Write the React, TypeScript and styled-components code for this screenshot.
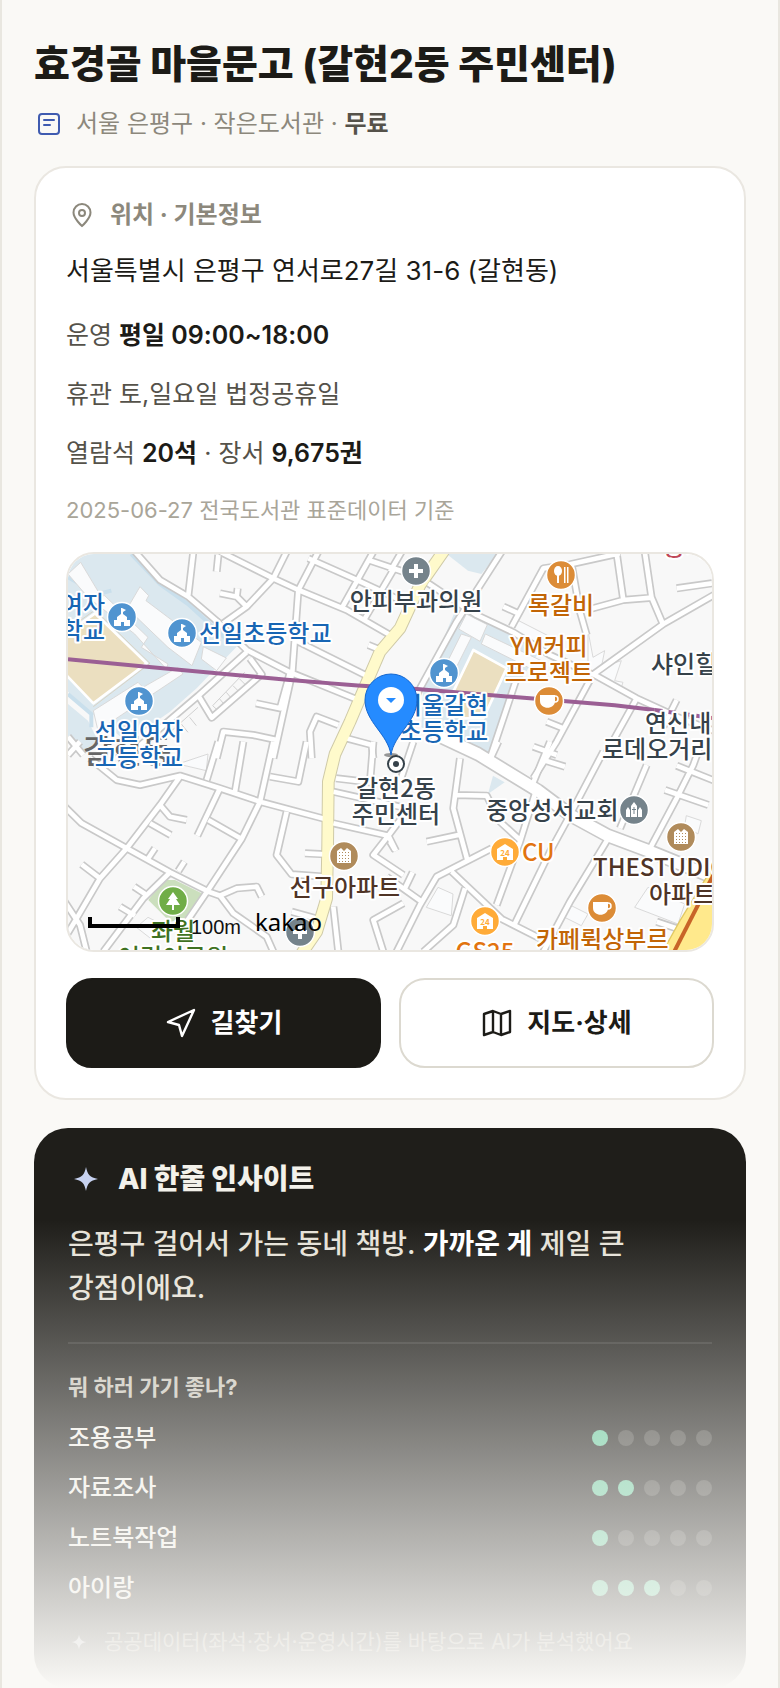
import React from 'react';
import styled, { createGlobalStyle, css } from 'styled-components';

const GlobalStyle = createGlobalStyle`
  *, *::before, *::after { box-sizing: border-box; }
  body {
    margin: 0;
    background: #faf9f6;
    color: #1c1b17;
    font-family: Inter, "Noto Sans CJK KR", sans-serif;
    word-break: keep-all;
  }
  h1, h2, h3, p, ul { margin: 0; padding: 0; }
`;

const Page = styled.main`
  position: relative;
  min-height: 100vh;
  padding: 39px 32px 0;
  border: solid #e9e7e0;
  border-width: 0 2px;
`;

const Title = styled.h1`
  font-size: 39px;
  line-height: 50px;
  font-weight: 800;
`;

const Meta = styled.p`
  display: flex;
  align-items: center;
  gap: 14px;
  margin-top: 17px;
  padding-left: 2px;
  font-size: 24px;
  line-height: 36px;
  color: #8c887c;
  strong { font-weight: 600; color: #55524a; }
`;

const Card = styled.section`
  margin-top: 24px;
  padding: 31px 30px 30px;
  background: #fff;
  border: 2px solid #eae7e1;
  border-radius: 32px;
`;

const CardHeading = styled.h2`
  display: flex;
  align-items: center;
  gap: 14px;
  padding-left: 2px;
  font-size: 24px;
  line-height: 32px;
  font-weight: 700;
  color: #8c887c;
`;

const Address = styled.p`
  margin-top: 20px;
  font-size: 26px;
  line-height: 40px;
`;

const Facts = styled.div`
  display: flex;
  flex-direction: column;
  gap: 23px;
  margin-top: 26px;
`;

const Fact = styled.p`
  font-size: 25px;
  line-height: 36px;
  color: #55524a;
  strong { font-weight: 600; color: #1c1b17; }
`;

const Source = styled.p`
  font-size: 22px;
  line-height: 32px;
  color: #a9a599;
`;

const MapBox = styled.div`
  height: 400px;
  margin-top: 26px;
  overflow: hidden;
  border: 2px solid #eae7e1;
  border-radius: 28px;
  svg { display: block; width: 100%; height: 100%; }
`;

const Actions = styled.div`
  display: grid;
  grid-template-columns: 1fr 1fr;
  gap: 18px;
  margin-top: 26px;
`;

const ActionButton = styled.button<{ $primary?: boolean }>`
  display: flex;
  align-items: center;
  justify-content: center;
  gap: 14px;
  height: 90px;
  padding: 0;
  border: 2px solid #dcd9d0;
  border-radius: 26px;
  background: #fff;
  color: #1c1b17;
  font: inherit;
  font-size: 26px;
  line-height: 36px;
  font-weight: 700;
  ${(p) => p.$primary && css`
    background: #1c1b17;
    border-color: #1c1b17;
    color: #fff;
  `}
`;

const Insight = styled.section`
  margin-top: 28px;
  padding: 31px 34px;
  border-radius: 34px;
  background: #1f1e1a;
  color: #f3f1ea;
`;

const InsightHeading = styled.h2`
  display: flex;
  align-items: center;
  gap: 14px;
  font-size: 28px;
  line-height: 40px;
  font-weight: 800;
`;

const InsightText = styled.p`
  margin-top: 23px;
  padding-bottom: 32px;
  border-bottom: 2px solid #34332f;
  font-size: 28px;
  line-height: 44px;
  font-weight: 500;
  color: #e6e2d8;
  strong { font-weight: 700; color: #fff; }
`;

const ScoreTitle = styled.h3`
  margin-top: 27px;
  font-size: 22px;
  line-height: 32px;
  font-weight: 700;
  color: #c9c5ba;
`;

const Scores = styled.ul`
  margin-top: 10px;
  list-style: none;
`;

const ScoreRow = styled.li`
  display: flex;
  align-items: center;
  justify-content: space-between;
  height: 50px;
  font-size: 24px;
  line-height: 36px;
  font-weight: 500;
  color: #f3f1ea;
`;

const Dots = styled.span`
  display: flex;
  gap: 10px;
`;

const Dot = styled.span<{ $on: boolean }>`
  width: 16px;
  height: 16px;
  border-radius: 50%;
  background: ${(p) => (p.$on ? '#68c89c' : '#45443f')};
`;

const Note = styled.p`
  display: flex;
  align-items: center;
  gap: 14px;
  margin-top: 14px;
  font-size: 21px;
  line-height: 30px;
  color: #8c887c;
`;

const Fade = styled.div`
  position: absolute;
  inset: auto 0 0;
  height: 468px;
  background: linear-gradient(rgba(250, 249, 246, 0), #faf9f6);
  pointer-events: none;
`;

const MapSvg = styled.svg`
  font-family: "Noto Sans CJK KR", sans-serif;
`;

const Label = styled.text`
  font-size: 24px;
  font-weight: 500;
  paint-order: stroke;
  stroke: #fff;
  stroke-width: 4px;
  stroke-linejoin: round;
`;

const District = styled.text`
  font-size: 32px;
  font-weight: 500;
  fill: #666;
`;

const Brand = styled.text`
  font-family: "Noto Sans", sans-serif;
  font-size: 24px;
  fill: #000;
`;

const ScaleText = styled.text`
  font-family: "Liberation Sans", sans-serif;
  font-size: 20px;
  fill: #111;
`;

const BookIcon = () => (
  <svg width="26" height="26" viewBox="0 0 26 26" fill="none" stroke="#3f5bb0" strokeWidth="2" strokeLinecap="round" aria-hidden="true">
    <rect x="3" y="3" width="20" height="20" rx="3" />
    <path d="M8 9h10M8 14h6" />
  </svg>
);

const PinIcon = () => (
  <svg width="28" height="28" viewBox="0 0 28 28" fill="none" stroke="#8c887c" strokeWidth="2" aria-hidden="true">
    <path d="M14 25s-8.500-7.500-8.500-13.500a8.500 8.500 0 0 1 17 0C22.500 17.500 14 25 14 25z" />
    <circle cx="14" cy="12" r="3" />
  </svg>
);

const SendIcon = () => (
  <svg width="32" height="32" viewBox="0 0 32 32" fill="none" stroke="currentColor" strokeWidth="2.4" strokeLinejoin="round" aria-hidden="true">
    <path d="M3 15 29 3 17 29 14 18z" />
  </svg>
);

const MapIcon = () => (
  <svg width="32" height="32" viewBox="0 0 32 32" fill="none" stroke="currentColor" strokeWidth="2.4" strokeLinejoin="round" aria-hidden="true">
    <path d="M3 7 12 4l8 3 9-3v21l-9 3-8-3-9 3zM12 4v21M20 7v21" />
  </svg>
);

const Sparkle = ({ size, color }: { size: number; color: string }) => (
  <svg width={size} height={size} viewBox="0 0 24 24" fill={color} aria-hidden="true">
    <path d="M12 4c1 5 2.500 7 8 8-5.500 1-7 3-8 8-1-5-2.500-7-8-8 5.500-1 7-3 8-8z" />
  </svg>
);

/* Road centre lines by map tile; each tile has its own origin. */
const TILES: Record<string, { at: [number, number]; roads: string }> = {
  nw: {
    at: [-24, -27],
    roads: `M225 20 300 105 385 155 470 228 560 315 690 382 895 465 M400 20 385 150 M475 30 470 80
      M480 20 640 100 715 135 860 195 990 270 M680 20 640 100 560 185 490 235 M560 185 530 155 480 145 M530 155 533 130
      M775 20 715 135 697 382 640 640 M745 40 880 100 1030 170 M940 20 845 190 M925 45 1030 80 M1000 75 915 220
      M690 382 660 490 588 475 M705 285 925 395 M925 300 962 315 M560 322 415 452 455 518 605 388 570 340
      M415 452 230 610 170 640 M470 640 490 560 580 570 650 585 M755 640 750 560 770 515 835 540 M860 580 935 600 940 640 M24 575 70 630 M24 630 60 590`,
  },
  ne: {
    at: [966, -27],
    roads: `M335 20 200 230 90 430 30 560 M35 20 0 80 M115 115 190 165 260 210 370 262 480 330 610 390
      M365 245 460 70 540 58 690 25 M340 185 385 205 M545 60 570 200 590 270 M680 25 700 165 590 195 M700 165 785 158 820 240
      M765 25 785 160 M980 145 820 237 610 388 M860 130 966 115 M610 388 740 460 860 515 980 560 M600 405 500 590 430 700
      M740 460 640 640 M430 605 500 630 M470 530 520 550 M820 545 860 465 M380 400 300 640`,
  },
  sw: {
    at: [-24, 573],
    roads: `M14 185 65 235 200 310 330 382 450 442 480 452 M90 40 170 105 240 120 360 92 480 130 600 170 795 222
      M360 95 300 180 200 310 120 400 50 520 14 580 M14 470 60 540 80 620 M300 180 330 215 380 225 M270 235 332 270
      M480 130 412 272 M445 225 545 282 M640 -10 600 170 545 282 440 442 380 530 M550 -10 525 140 M475 -10 440 105
      M740 -10 715 110 630 95 M680 200 650 330 695 388 795 395 M735 325 795 328 M695 500 775 522 M480 452 520 505 620 575 640 620
      M480 452 530 430 590 425 605 455 M330 382 250 460 130 620 M222 425 255 447 M180 485 225 512 M120 400 65 358
      M265 340 285 310 M355 378 373 350 M820 140 1020 185 M820 235 985 272 1020 225 M985 272 940 330 1030 390
      M820 485 835 620 M1030 475 940 525 970 620 M940 -10 930 112 828 100 M985 272 1008 318`,
  },
  se: {
    at: [966, 573],
    roads: `M70 -10 30 110 M210 40 190 190 232 345 M195 150 290 152 330 230 390 285 M480 -10 425 125 M460 45 525 65
      M640 20 540 210 480 320 370 545 M440 130 390 290 320 480 M655 280 540 470 460 620 M110 290 205 270
      M305 310 140 395 90 480 20 620 M185 380 335 522 450 580 M225 430 190 540 100 620 M-10 395 95 470 M45 430 68 382
      M0 290 15 315 M935 -10 910 60 860 160 780 310 M860 62 980 110 M825 135 955 180 M800 530 890 560 M770 60 690 250 M325 -10 295 55`,
  },
};

const MAIN_ROAD = 'M1080 530 1230 600 1410 710 1510 785 1620 845 1740 890 1950 975';
const YELLOW_ROAD = 'M1135 -20 1056 93 996 223 936 293 890 400 846 503 801 600 781 683 779 873 776 1033 746 1133 700 1200';
const BUILDINGS =
  'M0 60 38 25 92 115 60 130zM216 98 242 125 234 140 400 265 372 335 300 280 178 163zM406 278 475 312 446 350 400 315z' +
  'M76 470 210 385 225 400 330 340 345 360 90 530zM60 130 110 125 240 250 220 280 300 330 295 345 200 240z' +
  'M1195 180 1258 212 1236 262 1172 225zM1252 240 1420 320 1400 350 1240 270zM1180 240 1210 250 1160 350 1130 340z' +
  'M1348 198 1440 245 1430 280 1330 230zM1560 230 1575 310 1610 290 1600 340 1660 320 1640 380 1665 385 1655 415 1560 360z' +
  'M1110 1000 1155 1020 1150 1085 1075 1060zM1740 1000 1850 1050 1830 1110 1700 1060zM1500 1050 1560 1080 1540 1115 1490 1090z' +
  'M1855 785 1900 800 1890 840 1850 815zM240 1090 280 1110 250 1155 205 1120zM330 630 420 600 415 650z';

const Ground = () => (
  <g transform="scale(0.33333)" fill="none" strokeLinejoin="round">
    <path fill="#f8f8f8" d="M0 0h1932v1188H0z" />
    <g fill="#dbe8ef">
      <path d="M0 0H200L276 78 361 128 516 268 386 403 306 473 176 563 66 473 0 413z" />
      <path d="M0 450 60 500 90 560 40 600 0 560z" />
      <path d="M1136 0H1290L1240 60 1200 50z" />
      <path d="M1166 160 1200 178 1416 290 1346 395 1276 610 1190 590 1060 520 1066 400z" />
      <path d="M1180 573H1290L1255 622 1200 600zM1275 665 1310 685 1260 720z" />
    </g>
    <path stroke="#c9dfec" strokeWidth="12" d="M190 0 276 90 360 150 480 260M0 70 90 120 130 110M0 420 70 480 70 520" />
    <path fill="#fafbfc" stroke="#d9d9d9" strokeWidth="3" d={BUILDINGS} />
    <path stroke="#d0d0d0" strokeWidth="3" d="M434 455 530 355M434 455 450 470M455 435 472 455M475 415 492 435M495 395 512 412M515 375 532 392M300 540 390 460M340 510 360 535M365 490 385 515" />
    <path fill="#ebdfc0" stroke="#fff" strokeWidth="8" d="M-10 243 81 178 236 328 76 448-10 358z" />
    <path stroke="#d9c9ae" strokeWidth="2" d="M-10 233 81 168 246 328 76 458" />
    <path fill="#ebdfc0" stroke="#fff" strokeWidth="8" d="M1216 288 1316 343 1246 493 1186 493 1156 413z" />
    <path fill="#cbdfbd" d="M241 1038 286 978H321L401 1018 361 1093 306 1103z" />
    <g stroke="#c9c9c9" strokeWidth="24">
      {Object.entries(TILES).map(([k, t]) => (
        <path key={k} transform={`translate(${t.at.join(' ')})`} d={t.roads} />
      ))}
      <path strokeWidth="44" d={MAIN_ROAD} />
    </g>
    <path stroke="#cfcaa8" strokeWidth="38" d={YELLOW_ROAD} />
    <g stroke="#fff" strokeWidth="14">
      {Object.entries(TILES).map(([k, t]) => (
        <path key={k} transform={`translate(${t.at.join(' ')})`} d={t.roads} />
      ))}
      <path strokeWidth="34" d={MAIN_ROAD} />
    </g>
    <path stroke="#fffacb" strokeWidth="32" d={YELLOW_ROAD} />
    <path stroke="#e2c964" strokeWidth="4" fill="#ffe98c" d="M1940 930 1836 1100 1780 1200h160z" />
    <path stroke="#c86428" strokeWidth="12" d="M1940 955 1815 1200" />
    <path stroke="#9b5f94" strokeWidth="12" d="M0 316C300 345 600 374 906 397L1046 405 1386 433 1640 454 1760 468" />
    <path stroke="#9b5f94" strokeWidth="12" strokeDasharray="24 18" d="M1760 468 1940 493" />
  </g>
);

type Kind = 'school' | 'hospital' | 'food' | 'cafe' | 'apt' | 'store' | 'church' | 'park';

const COLORS: Record<Kind, string> = {
  school: '#5094d0',
  hospital: '#75838b',
  food: '#dc8c37',
  cafe: '#dc8c37',
  apt: '#b08b5b',
  store: '#ffab38',
  church: '#75838b',
  park: '#70ad47',
};

const APT_WINDOWS = [-4, -1, 2, 5].flatMap((y) => [-5, -2, 1, 4].map((x) => `M${x} ${y}h1v1h-1z`)).join('');

const Glyph = ({ kind }: { kind: Kind }) => {
  const color = COLORS[kind];
  switch (kind) {
    case 'school':
      return <path fill="#fff" d="M0-9 4-7 1-5v2l4 3v3h3v6H2V5h-3v4h-7V3h3V0l4-3v-6z" />;
    case 'hospital':
      return <path fill="#fff" d="M-2-7h4v5h5v4H2v5h-4V2h-5v-4h5z" />;
    case 'food':
      return (
        <g fill="#fff">
          <ellipse cx="-3" cy="-4" rx="4" ry="5" />
          <path d="M-4 0h2v8h-2zM3-8h1.500V8H3zM6-8h1.500V8H6z" />
        </g>
      );
    case 'cafe':
      return (
        <g>
          <path fill="#fff" d="M-9-6H6V0C6 9-9 9-9 0z" />
          <circle cx="6" cy="-2" r="3" fill="none" stroke="#fff" strokeWidth="1.500" />
        </g>
      );
    case 'apt':
      return (
        <g>
          <path fill="#fff" d="M-7 7v-12l4-3 3 3 3-3 4 3V7z" />
          <path fill={color} d={APT_WINDOWS} />
        </g>
      );
    case 'store':
      return (
        <g>
          <path fill="#fff" d="M-8 8v-11l8-5 8 5V8H2V5h-4v3z" />
          <text y="4" textAnchor="middle" fontSize="8" fontWeight="700" fill={color}>24</text>
        </g>
      );
    case 'church':
      return (
        <g>
          <path fill="#fff" d="M-3 7v-11l3-4 3 4V7zM-8 7V0l2-3 2 3v7zM4 7V0l2-3 2 3v7z" />
          <path fill={color} d="M-.500-3h1v2h1.500v1H.500v4h-1V0H-2v-1h1.500z" />
        </g>
      );
    case 'park':
      return <path fill="#fff" d="M0-9l5 7H3l4 6H1v5h-2V4h-6l4-6h-2z" />;
  }
};

const POIS: [Kind, number, number][] = [
  ['school', 54, 63], ['school', 114, 79], ['school', 71, 147], ['school', 376, 119],
  ['hospital', 348, 17], ['hospital', 232, 378], ['food', 493, 21], ['cafe', 481, 147],
  ['cafe', 534, 354], ['apt', 276, 302], ['apt', 613, 283], ['store', 437, 298],
  ['store', 417, 367], ['church', 566, 256], ['park', 105, 347],
];

const BLUE = '#1866b4';
const SLATE = '#36424a';
const ORANGE = '#c26506';
const BROWN = '#4f3426';
const GREEN = '#3f7222';

type Anchor = 'start' | 'middle' | 'end';
const LABELS: [string, number, number, string, Anchor][] = [
  ['선일여자', 37, 59, BLUE, 'end'], ['중학교', 37, 85, BLUE, 'end'],
  ['선일초등학교', 131, 88, BLUE, 'start'],
  ['선일여자', 71, 186, BLUE, 'middle'], ['고등학교', 71, 212, BLUE, 'middle'],
  ['서울갈현', 376, 160, BLUE, 'middle'], ['초등학교', 376, 186, BLUE, 'middle'],
  ['안피부과의원', 348, 56, SLATE, 'middle'],
  ['록갈비', 493, 60, ORANGE, 'middle'],
  ['YM커피', 481, 101, ORANGE, 'middle'], ['프로젝트', 481, 127, ORANGE, 'middle'],
  ['샤인힐', 583, 119, SLATE, 'start'],
  ['연신내', 577, 178, SLATE, 'start'], ['로데오거리', 534, 204, SLATE, 'start'],
  ['갈현2동', 328, 243, SLATE, 'middle'], ['주민센터', 328, 269, SLATE, 'middle'],
  ['중앙성서교회', 418, 265, SLATE, 'start'],
  ['CU', 454, 307, '#e27410', 'start'], ['GS25', 417, 406, '#e27410', 'middle'],
  ['THESTUDIO', 525, 322, BROWN, 'start'], ['아파트', 581, 349, BROWN, 'start'],
  ['선구아파트', 277, 342, BROWN, 'middle'],
  ['카페뤽상부르', 468, 394, ORANGE, 'start'],
  ['좌월', 105, 386, GREEN, 'middle'], ['어린이공원', 105, 412, GREEN, 'middle'],
  ['종가', 595, 1, '#bf4858', 'start'],
];

const LocationMap = () => (
  <MapSvg viewBox="0 0 644 396" preserveAspectRatio="xMidYMid slice" role="img" aria-label="갈현2동 주민센터 주변 지도">
    <Ground />
    <District x="15" y="209">갈현동</District>
    {LABELS.map(([text, x, y, fill, anchor]) => (
      <Label key={`${text}${x}${y}`} x={x} y={y} fill={fill} textAnchor={anchor}>{text}</Label>
    ))}
    {POIS.map(([kind, x, y]) => (
      <g key={`${x}-${y}`} transform={`translate(${x} ${y})`}>
        <circle r="14.500" fill={COLORS[kind]} stroke="#fff" strokeWidth="1.500" />
        <Glyph kind={kind} />
      </g>
    ))}
    <circle cx="328" cy="210" r="8" fill="#fff" stroke={SLATE} strokeWidth="2" />
    <circle cx="328" cy="210" r="3" fill={SLATE} />
    <ellipse cx="323" cy="201" rx="7" ry="2" fill="#333" opacity="0.5" />
    <path fill="#258bff" stroke="#1467d0" d="M323 201C320 180 297 168 297 146a26 26 0 0 1 52 0c0 22-23 34-26 55z" />
    <circle cx="323" cy="146" r="13" fill="#fff" />
    <path fill="#258bff" d="M318 144h10l-5 5z" />
    <path fill="none" stroke="#000" strokeWidth="4" d="M22 363v9h88v-9" />
    <ScaleText x="123" y="380">100m</ScaleText>
    <Brand x="187" y="377">kakao</Brand>
  </MapSvg>
);

const SCORES: [string, number][] = [['조용공부', 1], ['자료조사', 2], ['노트북작업', 1], ['아이랑', 3]];

export default function App() {
  return (
    <>
      <GlobalStyle />
      <Page>
        <Title>효경골 마을문고 (갈현2동 주민센터)</Title>
        <Meta>
          <BookIcon />
          <span>서울 은평구 · 작은도서관 · <strong>무료</strong></span>
        </Meta>
        <Card>
          <CardHeading><PinIcon />위치 · 기본정보</CardHeading>
          <Address>서울특별시 은평구 연서로27길 31-6 (갈현동)</Address>
          <Facts>
            <Fact>운영 <strong>평일 09:00~18:00</strong></Fact>
            <Fact>휴관 토,일요일 법정공휴일</Fact>
            <Fact>열람석 <strong>20석</strong> · 장서 <strong>9,675권</strong></Fact>
            <Source>2025-06-27 전국도서관 표준데이터 기준</Source>
          </Facts>
          <MapBox><LocationMap /></MapBox>
          <Actions>
            <ActionButton type="button" $primary><SendIcon />길찾기</ActionButton>
            <ActionButton type="button"><MapIcon />지도·상세</ActionButton>
          </Actions>
        </Card>
        <Insight>
          <InsightHeading><Sparkle size={36} color="#c7d2f0" />AI 한줄 인사이트</InsightHeading>
          <InsightText>은평구 걸어서 가는 동네 책방. <strong>가까운 게</strong> 제일 큰 강점이에요.</InsightText>
          <ScoreTitle>뭐 하러 가기 좋나?</ScoreTitle>
          <Scores>
            {SCORES.map(([name, score]) => (
              <ScoreRow key={name}>
                {name}
                <Dots role="img" aria-label={`${score} / 5`}>
                  {[1, 2, 3, 4, 5].map((n) => <Dot key={n} $on={n <= score} />)}
                </Dots>
              </ScoreRow>
            ))}
          </Scores>
          <Note><Sparkle size={22} color="#a9adb8" />공공데이터(좌석·장서·운영시간)를 바탕으로 AI가 분석했어요</Note>
        </Insight>
        <Fade />
      </Page>
    </>
  );
}
